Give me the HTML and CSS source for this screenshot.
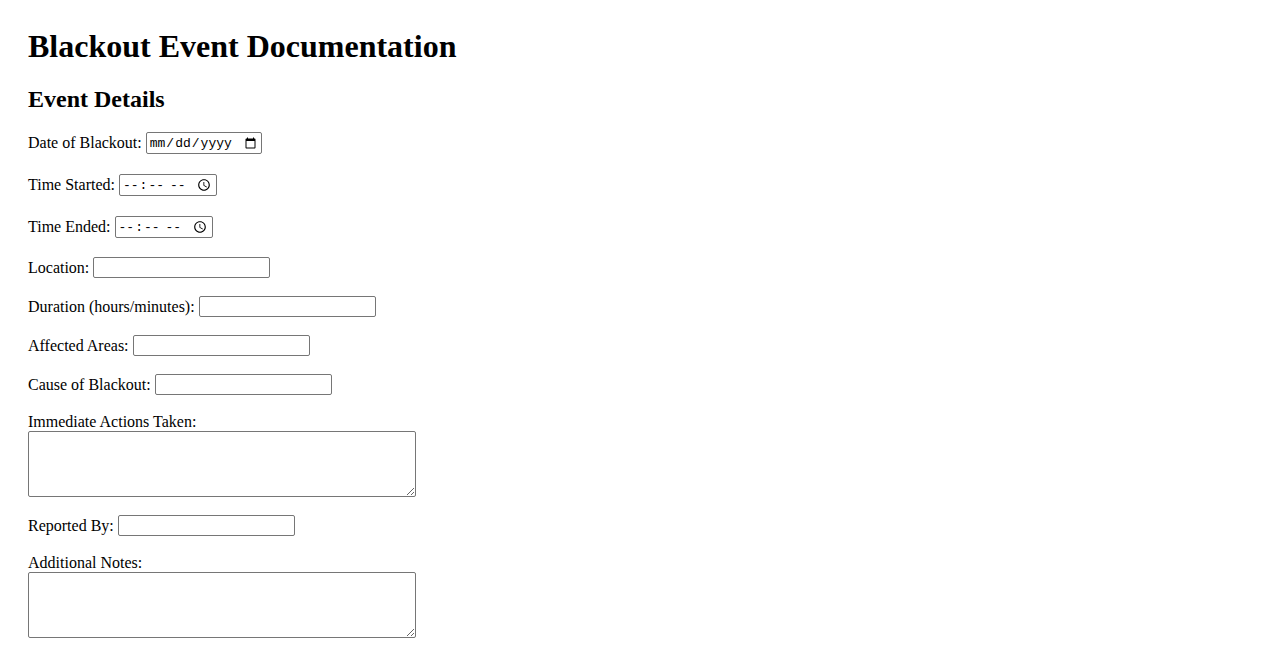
FILE: index.html
```html
<!DOCTYPE html>
<html lang="en">
<head>
<meta charset="utf-8">
<title>Blackout Event Documentation</title>
<link rel="stylesheet" href="styles.css">
</head>
<body>
<h1 class="title">Blackout Event Documentation</h1>
<h2 class="subtitle">Event Details</h2>
<form class="form">
  <div class="row row-tall">
    <label for="date">Date of Blackout:</label>
    <input class="in-date" type="date" id="date">
  </div>
  <div class="row row-tall">
    <label for="start">Time Started:</label>
    <input class="in-time" type="time" id="start">
  </div>
  <div class="row row-tall">
    <label for="end">Time Ended:</label>
    <input class="in-time" type="time" id="end">
  </div>
  <div class="row">
    <label for="loc">Location:</label>
    <input class="in-text" type="text" id="loc">
  </div>
  <div class="row">
    <label for="dur">Duration (hours/minutes):</label>
    <input class="in-text" type="text" id="dur">
  </div>
  <div class="row">
    <label for="areas">Affected Areas:</label>
    <input class="in-text" type="text" id="areas">
  </div>
  <div class="row">
    <label for="cause">Cause of Blackout:</label>
    <input class="in-text" type="text" id="cause">
  </div>
  <div class="block block-first">
    <label class="block-label" for="actions">Immediate Actions Taken:</label>
    <textarea class="area" id="actions"></textarea>
  </div>
  <div class="row">
    <label for="rep">Reported By:</label>
    <input class="in-text" type="text" id="rep">
  </div>
  <div class="block">
    <label class="block-label" for="notes">Additional Notes:</label>
    <textarea class="area" id="notes"></textarea>
  </div>
</form>
</body>
</html>
```
FILE: styles.css
```css
html, body {
  background: #ffffff;
}
body {
  margin: 0;
  padding: 28px;
  font-family: "Liberation Serif", "Times New Roman", serif;
  font-size: 16px;
  color: #000000;
}
.title {
  margin: 0 0 20px;
  font-size: 32px;
  line-height: 37px;
  font-weight: bold;
}
.subtitle {
  margin: 0 0 17px;
  font-size: 24px;
  line-height: 28px;
  font-weight: bold;
}
.form {
  display: flex;
  flex-direction: column;
  gap: 16px;
  margin: 0;
}
.row {
  display: flex;
  align-items: center;
  gap: 4px;
  height: 23px;
}
.row-tall {
  height: 26px;
}
.row label {
  line-height: 18px;
}
input, textarea {
  box-sizing: border-box;
  border: 1px solid #767676;
  border-radius: 2px;
  background: #ffffff;
  margin: 0;
}
.in-text {
  width: 177px;
  height: 21px;
  padding: 1px 2px;
  font-family: "Liberation Sans", Arial, sans-serif;
  font-size: 13.33px;
}
.in-date {
  width: 116px;
  height: 22px;
  padding: 1px 2px;
  font-family: "Liberation Mono", "Courier New", monospace;
  font-size: 13px;
}
.in-time {
  width: 98px;
  height: 22px;
  padding: 1px 2px;
  font-family: "Liberation Mono", "Courier New", monospace;
  font-size: 13px;
}
.block {
  display: flex;
  flex-direction: column;
  align-items: flex-start;
}
.block-first {
  padding-bottom: 1px;
}
.block-label {
  line-height: 19px;
}
.area {
  width: 388px;
  height: 66px;
  padding: 2px;
  font-family: "Liberation Mono", monospace;
  font-size: 13.33px;
}
```
